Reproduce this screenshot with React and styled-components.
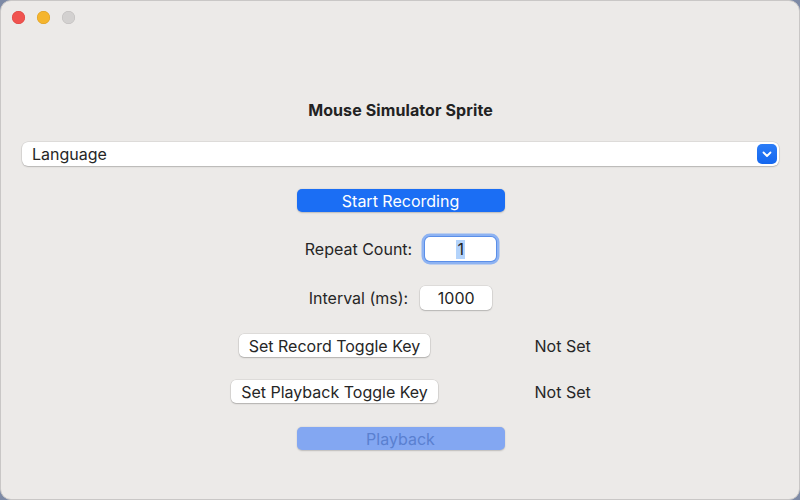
import React from 'react'
import styled, { createGlobalStyle } from 'styled-components'

const GlobalStyle = createGlobalStyle`
  html, body {
    margin: 0;
    padding: 0;
    background: #7d8aa6;
  }
  body {
    font-family: Inter, "Noto Sans", "Liberation Sans", sans-serif;
    -webkit-font-smoothing: antialiased;
  }
`

const Window = styled.div`
  width: 800px;
  height: 500px;
  box-sizing: border-box;
  background: #eceae8;
  border-radius: 11px;
  border: 1px solid #c9c7c6;
  overflow: hidden;
  display: flex;
  flex-direction: column;
  color: #262626;
`

const TitleBar = styled.div`
  height: 32px;
  display: flex;
  align-items: center;
  gap: 12px;
  padding-left: 11px;
`

const Light = styled.span`
  width: 13px;
  height: 13px;
  border-radius: 50%;
  background: ${(p) => p.$color};
  box-shadow: inset 0 0 0 0.5px ${(p) => p.$edge};
`

const Content = styled.div`
  display: flex;
  flex-direction: column;
  align-items: center;
  padding: 0 20px 0 21px;
`

const Heading = styled.h1`
  margin: 67px 0 0;
  font-size: 16px;
  font-weight: 700;
  line-height: 20px;
  color: #222;
  letter-spacing: 0.1px;
`

const Dropdown = styled.div`
  margin-top: 22px;
  align-self: stretch;
  height: 24px;
  background: #fff;
  border-radius: 6px;
  box-shadow: 0 0 0 0.5px rgba(0, 0, 0, 0.12), 0 1px 1.5px rgba(0, 0, 0, 0.18);
  display: flex;
  align-items: center;
  justify-content: space-between;
  padding: 0 2px 0 10px;
  font-size: 16px;
  color: #262626;
`

const Chevron = styled.span`
  width: 20px;
  height: 20px;
  border-radius: 5px;
  background: linear-gradient(#2b7cf7, #1467ef);
  display: flex;
  align-items: center;
  justify-content: center;
`

const PrimaryButton = styled.button`
  width: 208px;
  height: 23px;
  border: none;
  border-radius: 5px;
  font-family: inherit;
  font-size: 16px;
  padding: 0;
  background: ${(p) => (p.disabled ? '#83a7f2' : '#1b6ef4')};
  color: ${(p) => (p.disabled ? '#5a80d0' : '#ffffff')};
  box-shadow: 0 0.5px 1.5px rgba(0, 0, 0, 0.2);
  margin-top: ${(p) => p.$top}px;
`

const FieldRow = styled.div`
  display: flex;
  align-items: center;
  gap: ${(p) => p.$gap}px;
  margin-top: ${(p) => p.$top}px;
  font-size: 16px;
  color: #262626;
`

const Field = styled.div`
  width: ${(p) => p.$w}px;
  height: 24px;
  box-sizing: border-box;
  background: #fff;
  border-radius: 5px;
  display: flex;
  align-items: center;
  justify-content: center;
  font-size: 16px;
  color: #1f1f1f;
  box-shadow: ${(p) =>
    p.$focused
      ? '0 0 0 1px #5b8fe8, 0 0 0 3.5px #8eb3f2'
      : '0 0 0 0.5px rgba(0,0,0,0.12), 0 1px 1.5px rgba(0,0,0,0.18)'};
`

const Selected = styled.span`
  background: #b3d3fb;
  padding: 0 1px;
  line-height: 19px;
`

const KeyRow = styled.div`
  display: grid;
  grid-template-columns: 220px 42px;
  column-gap: 90px;
  align-items: center;
  margin-top: ${(p) => p.$top}px;
`

const KeyCell = styled.div`
  display: flex;
  justify-content: center;
`

const SecondaryButton = styled.button`
  height: 23px;
  padding: 0 10px;
  border: none;
  border-radius: 5px;
  background: #fff;
  font-family: inherit;
  font-size: 16px;
  color: #262626;
  white-space: nowrap;
  box-shadow: 0 0 0 0.5px rgba(0, 0, 0, 0.12), 0 1px 1.5px rgba(0, 0, 0, 0.2);
`

const Status = styled.span`
  white-space: nowrap;
  font-size: 16px;
  color: #262626;
`

const App = () => {
  return (
    <>
      <GlobalStyle />
      <Window>
        <TitleBar>
          <Light $color="#f0534f" $edge="#d9403c" />
          <Light $color="#f5b52d" $edge="#d99a1f" />
          <Light $color="#d3d1d0" $edge="#bdbbba" />
        </TitleBar>
        <Content>
          <Heading>Mouse Simulator Sprite</Heading>
          <Dropdown>
            <span>Language</span>
            <Chevron>
              <svg width="10" height="7" viewBox="0 0 10 7">
                <path
                  d="M1.5 1.5 L5 5 L8.5 1.5"
                  fill="none"
                  stroke="#fff"
                  strokeWidth="1.8"
                  strokeLinecap="round"
                  strokeLinejoin="round"
                />
              </svg>
            </Chevron>
          </Dropdown>
          <PrimaryButton $top={23}>Start Recording</PrimaryButton>
          <FieldRow $top={25} $gap={13}>
            <span>Repeat Count:</span>
            <Field $w={71} $focused>
              <Selected>1</Selected>
            </Field>
          </FieldRow>
          <FieldRow $top={25} $gap={12}>
            <span>Interval (ms):</span>
            <Field $w={72}>1000</Field>
          </FieldRow>
          <KeyRow $top={24}>
            <KeyCell>
              <SecondaryButton>Set Record Toggle Key</SecondaryButton>
            </KeyCell>
            <Status>Not Set</Status>
          </KeyRow>
          <KeyRow $top={23}>
            <KeyCell>
              <SecondaryButton>Set Playback Toggle Key</SecondaryButton>
            </KeyCell>
            <Status>Not Set</Status>
          </KeyRow>
          <PrimaryButton $top={24} disabled>
            Playback
          </PrimaryButton>
        </Content>
      </Window>
    </>
  )
}

export default App
